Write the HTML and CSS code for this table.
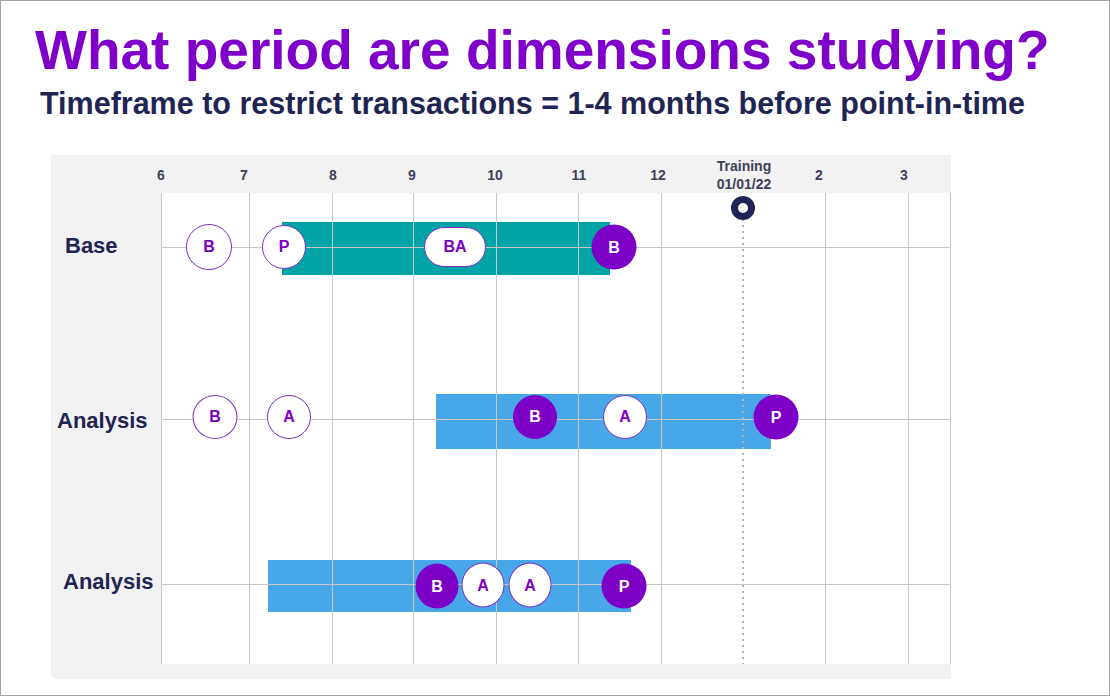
FILE: index.html
```html
<!DOCTYPE html>
<html lang="en">
<head>
<meta charset="utf-8">
<title>What period are dimensions studying?</title>
<link rel="stylesheet" href="styles.css">
</head>
<body>
<div class="slide">
  <h1 class="title">What period are dimensions studying?</h1>
  <p class="subtitle">Timeframe to restrict transactions = 1-4 months before point-in-time</p>

  <div class="chart">
    <div class="corner"></div>
    <div class="axis">
      <span class="tick" style="left:0px">6</span>
      <span class="tick" style="left:83px">7</span>
      <span class="tick" style="left:172px">8</span>
      <span class="tick" style="left:251px">9</span>
      <span class="tick" style="left:334px">10</span>
      <span class="tick" style="left:418px">11</span>
      <span class="tick" style="left:497px">12</span>
      <span class="tick training" style="left:583px">Training<br>01/01/22</span>
      <span class="tick" style="left:658px">2</span>
      <span class="tick" style="left:743px">3</span>
    </div>

    <div class="labels">
      <span class="row-label" style="left:14px;top:42px">Base</span>
      <span class="row-label" style="left:6px;top:217px">Analysis</span>
      <span class="row-label" style="left:12px;top:378px">Analysis</span>
    </div>

    <div class="plot">
      <!-- bars -->
      <div class="bar teal" style="left:121px;top:29px;width:328px;height:53px"></div>
      <div class="bar blue" style="left:275px;top:201px;width:335px;height:55px"></div>
      <div class="bar blue" style="left:107px;top:367px;width:363px;height:52px"></div>

      <!-- vertical gridlines -->
      <div class="vline" style="left:0px"></div>
      <div class="vline" style="left:88px"></div>
      <div class="vline" style="left:171px"></div>
      <div class="vline" style="left:252px"></div>
      <div class="vline" style="left:335px"></div>
      <div class="vline" style="left:417px"></div>
      <div class="vline" style="left:500px"></div>
      <div class="vline" style="left:664px"></div>
      <div class="vline" style="left:747px"></div>
      <div class="vline" style="left:789px"></div>

      <!-- horizontal row lines -->
      <div class="hline" style="top:54px"></div>
      <div class="hline" style="top:226px"></div>
      <div class="hline" style="top:391px"></div>

      <!-- training point-in-time -->
      <div class="dotted" style="left:581px"></div>
      <div class="marker" style="left:581px;top:15px"></div>

      <!-- Base row -->
      <div class="dot outline" style="left:48px;top:54px;width:46px;height:46px">B</div>
      <div class="dot outline" style="left:123px;top:54px;width:44px;height:44px">P</div>
      <div class="dot outline pill" style="left:294px;top:54px;width:62px;height:40px">BA</div>
      <div class="dot filled" style="left:453px;top:54px;width:45px;height:45px">B</div>

      <!-- Analysis row 1 -->
      <div class="dot outline" style="left:54px;top:224px;width:45px;height:44px">B</div>
      <div class="dot outline" style="left:128px;top:224px;width:44px;height:44px">A</div>
      <div class="dot filled" style="left:374px;top:224px;width:44px;height:44px">B</div>
      <div class="dot outline" style="left:464px;top:224px;width:44px;height:44px">A</div>
      <div class="dot filled" style="left:615px;top:224px;width:45px;height:45px">P</div>

      <!-- Analysis row 2 -->
      <div class="dot filled" style="left:276px;top:393px;width:43px;height:45px">B</div>
      <div class="dot outline" style="left:322px;top:392px;width:43px;height:45px">A</div>
      <div class="dot outline" style="left:369px;top:392px;width:43px;height:45px">A</div>
      <div class="dot filled" style="left:463px;top:393px;width:45px;height:45px">P</div>
    </div>

    <div class="footer"></div>
  </div>
</div>
</body>
</html>
```
FILE: styles.css
```css
* { box-sizing: border-box; }

html, body {
  margin: 0;
  padding: 0;
}

body {
  width: 1110px;
  height: 696px;
  background: #ffffff;
  font-family: "Liberation Sans", Arial, Helvetica, sans-serif;
  overflow: hidden;
}

.slide {
  width: 1110px;
  height: 696px;
  border: 1px solid #a4a4a4;
  display: flex;
  flex-direction: column;
}

.title {
  margin: 22px 0 0 34px;
  font-size: 55px;
  line-height: 55px;
  font-weight: bold;
  color: #7f00c8;
  white-space: nowrap;
}

.subtitle {
  margin: 10px 0 0 39px;
  font-size: 30.5px;
  line-height: 30px;
  font-weight: bold;
  color: #1f2553;
  white-space: nowrap;
}

.chart {
  margin: 37px 0 0 50px;
  width: 900px;
  height: 524px;
  background: #f2f2f2;
  border-radius: 0 0 0 6px;
  display: grid;
  grid-template-columns: 110px 790px;
  grid-template-rows: 38px 471px 15px;
}

.axis {
  position: relative;
}

.tick {
  position: absolute;
  top: 13px;
  transform: translateX(-50%);
  font-size: 14px;
  line-height: 14px;
  font-weight: bold;
  color: #3d4158;
  white-space: nowrap;
}

.tick.training {
  top: 2px;
  line-height: 18px;
  text-align: center;
}

.labels {
  position: relative;
}

.row-label {
  position: absolute;
  font-size: 22px;
  line-height: 22px;
  font-weight: bold;
  color: #1f2452;
  white-space: nowrap;
}

.plot {
  position: relative;
  background: #ffffff;
}

.footer {
  grid-column: 1 / 3;
}

.bar {
  position: absolute;
  z-index: 1;
}

.bar.teal { background: #00a3a6; }
.bar.blue { background: #48a7e8; }

.vline {
  position: absolute;
  top: 0;
  bottom: 0;
  width: 1px;
  background: #c8c8c8;
  z-index: 2;
}

.hline {
  position: absolute;
  left: 0;
  right: 0;
  height: 1px;
  background: #c8c8c8;
  z-index: 2;
}

.dotted {
  position: absolute;
  top: 26px;
  bottom: 0;
  width: 2px;
  background: repeating-linear-gradient(to bottom, #b3b3b3 0, #b3b3b3 2px, transparent 2px, transparent 6px);
  z-index: 2;
}

.marker {
  position: absolute;
  width: 24px;
  height: 24px;
  margin-left: -11px;
  margin-top: -12px;
  border-radius: 50%;
  border: 7px solid #1f2452;
  background: #ffffff;
  z-index: 3;
}

.dot {
  position: absolute;
  transform: translate(-50%, -50%);
  border-radius: 50%;
  display: flex;
  align-items: center;
  justify-content: center;
  font-size: 16px;
  font-weight: bold;
  z-index: 3;
}

.dot.outline {
  background: #ffffff;
  border: 1.5px solid #7a2fc2;
  color: #7b00c4;
}

.dot.filled {
  background: #7d00c6;
  color: #ffffff;
}

.dot.pill {
  border-radius: 20px;
}
```
